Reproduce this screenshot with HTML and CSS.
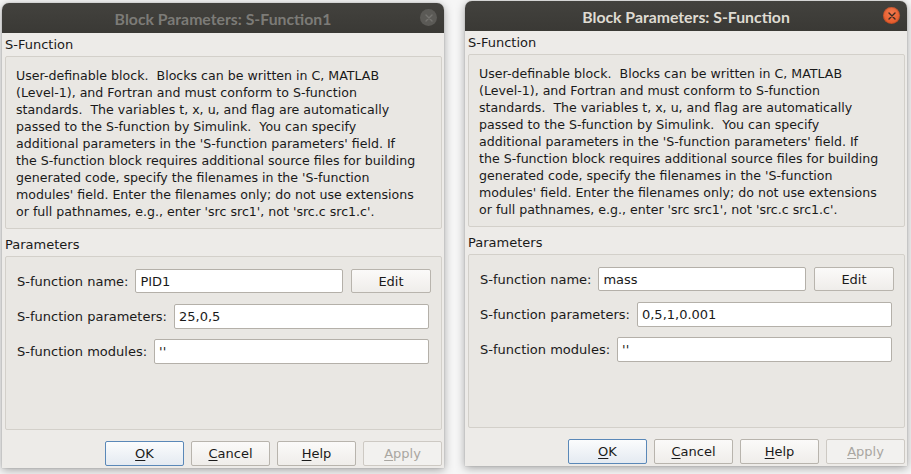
FILE: index.html
```html
<!DOCTYPE html>
<html>
<head>
<meta charset="utf-8">
<link rel="stylesheet" href="styles.css">
</head>
<body>
<div class="desktop">
  <div class="window win-left inactive">
    <div class="titlebar">
      <span class="title">Block Parameters: S-Function1</span>
      <span class="close"><svg width="8" height="8" viewBox="0 0 8 8"><path d="M1 1L7 7M7 1L1 7" stroke="currentColor" stroke-width="1.4" stroke-linecap="round"/></svg></span>
    </div>
    <div class="content">
      <div class="section-label">S-Function</div>
      <div class="desc">User-definable block.&nbsp; Blocks can be written in C, MATLAB<br>(Level-1), and Fortran and must conform to S-function<br>standards.&nbsp; The variables t, x, u, and flag are automatically<br>passed to the S-function by Simulink.&nbsp; You can specify<br>additional parameters in the 'S-function parameters' field. If<br>the S-function block requires additional source files for building<br>generated code, specify the filenames in the 'S-function<br>modules' field. Enter the filenames only; do not use extensions<br>or full pathnames, e.g., enter 'src src1', not 'src.c src1.c'.</div>
      <div class="section-label">Parameters</div>
      <div class="panel">
        <div class="row row-name">
          <span class="lbl">S-function name:</span>
          <span class="input">PID1</span>
          <span class="btn edit">Edit</span>
        </div>
        <div class="row">
          <span class="lbl">S-function parameters:</span>
          <span class="input">25,0,5</span>
        </div>
        <div class="row">
          <span class="lbl">S-function modules:</span>
          <span class="input">''</span>
        </div>
      </div>
      <div class="buttons">
        <span class="btn default"><u>O</u>K</span>
        <span class="btn"><u>C</u>ancel</span>
        <span class="btn"><u>H</u>elp</span>
        <span class="btn disabled"><u>A</u>pply</span>
      </div>
    </div>
  </div>

  <div class="window win-right">
    <div class="titlebar">
      <span class="title">Block Parameters: S-Function</span>
      <span class="close"><svg width="8" height="8" viewBox="0 0 8 8"><path d="M1 1L7 7M7 1L1 7" stroke="currentColor" stroke-width="1.4" stroke-linecap="round"/></svg></span>
    </div>
    <div class="content">
      <div class="section-label">S-Function</div>
      <div class="desc">User-definable block.&nbsp; Blocks can be written in C, MATLAB<br>(Level-1), and Fortran and must conform to S-function<br>standards.&nbsp; The variables t, x, u, and flag are automatically<br>passed to the S-function by Simulink.&nbsp; You can specify<br>additional parameters in the 'S-function parameters' field. If<br>the S-function block requires additional source files for building<br>generated code, specify the filenames in the 'S-function<br>modules' field. Enter the filenames only; do not use extensions<br>or full pathnames, e.g., enter 'src src1', not 'src.c src1.c'.</div>
      <div class="section-label">Parameters</div>
      <div class="panel">
        <div class="row row-name">
          <span class="lbl">S-function name:</span>
          <span class="input">mass</span>
          <span class="btn edit">Edit</span>
        </div>
        <div class="row">
          <span class="lbl">S-function parameters:</span>
          <span class="input">0,5,1,0.001</span>
        </div>
        <div class="row">
          <span class="lbl">S-function modules:</span>
          <span class="input">''</span>
        </div>
      </div>
      <div class="buttons">
        <span class="btn default"><u>O</u>K</span>
        <span class="btn"><u>C</u>ancel</span>
        <span class="btn"><u>H</u>elp</span>
        <span class="btn disabled"><u>A</u>pply</span>
      </div>
    </div>
  </div>
</div>
</body>
</html>
```

FILE: styles.css
```css
* { box-sizing: border-box; }
html, body { margin: 0; padding: 0; }
body {
  width: 911px;
  height: 474px;
  overflow: hidden;
  background: #f6f6f6;
  font-family: "DejaVu Sans", sans-serif;
  font-size: 13px;
  color: #1a1a1a;
}
.desktop {
  position: relative;
  width: 911px;
  height: 474px;
}
.window {
  position: absolute;
  width: 442px;
  height: 465px;
  background: #edebe8;
  border-radius: 7px 7px 0 0;
  box-shadow: 0 2px 10px rgba(0,0,0,0.35), 0 0 1px rgba(0,0,0,0.4);
  display: flex;
  flex-direction: column;
  overflow: hidden;
}
.win-left { left: 2px; top: 3px; }
.win-right { left: 465px; top: 1px; }

.titlebar {
  height: 30px;
  flex: none;
  background: linear-gradient(#43423e, #3a3935);
  display: flex;
  align-items: center;
  justify-content: center;
  position: relative;
}
.title {
  font-family: "Lato", "DejaVu Sans", sans-serif;
  font-weight: 700;
  font-size: 15.8px;
  color: #dfdbd2;
}
.inactive .title { color: #7c7b77; }
.close {
  position: absolute;
  right: 7px;
  top: 6px;
  width: 17px;
  height: 17px;
  border-radius: 50%;
  background: radial-gradient(circle at 50% 35%, #f27a4f, #e0501e);
  color: #3b2a22;
  display: flex;
  align-items: center;
  justify-content: center;
  box-shadow: inset 0 0 0 1px rgba(0,0,0,0.15);
}
.inactive .close {
  background: #5b5a56;
  color: #74736f;
  box-shadow: none;
}

.content {
  flex: 1;
  display: flex;
  flex-direction: column;
  padding: 3px 2px 0 3px;
}
.section-label {
  height: 17px;
  line-height: 17px;
  font-size: 13px;
  margin-bottom: 3px;
}
.desc {
  height: 173px;
  border: 1px solid #d3d0ca;
  border-radius: 2px;
  background: #e9e7e3;
  padding: 10px 10px;
  line-height: 17px;
  font-size: 12.6px;
  white-space: nowrap;
  margin-bottom: 7px;
}
.panel {
  height: 174px;
  border: 1px solid #d3d0ca;
  border-radius: 2px;
  background: #e9e7e3;
  padding: 12px 10px 0 11px;
  display: flex;
  flex-direction: column;
  gap: 10px;
}
.row {
  display: flex;
  align-items: center;
  height: 25px;
  padding-right: 2px;
  font-size: 13px;
}
.row-name { height: 24px; padding-right: 0; margin-bottom: 1px; }
.lbl { margin-right: 7px; white-space: nowrap; }
.input {
  flex: 1;
  height: 100%;
  background: #fff;
  border: 1px solid #b4b0a9;
  border-radius: 2px;
  padding: 0 4px;
  display: flex;
  align-items: center;
  font-size: 13px;
}
.btn {
  display: flex;
  align-items: center;
  justify-content: center;
  width: 80px;
  height: 25px;
  border: 1px solid #b8b4ad;
  border-radius: 2px;
  background: linear-gradient(#fbfaf9, #efedea);
  font-size: 13px;
  color: #1a1a1a;
}
.edit { margin-left: 8px; height: 24px; }
.buttons {
  display: flex;
  justify-content: flex-end;
  gap: 7px;
  margin-top: 11px;
}
.buttons .btn { width: 79px; }
.btn.default {
  border-color: #5a88b8;
  background: linear-gradient(#fbfcfd, #e4eaf1);
}
.btn.disabled {
  color: #a9a6a1;
  background: #f2f1ef;
  border-color: #cdc9c3;
}
u { text-underline-offset: 2px; }
```
